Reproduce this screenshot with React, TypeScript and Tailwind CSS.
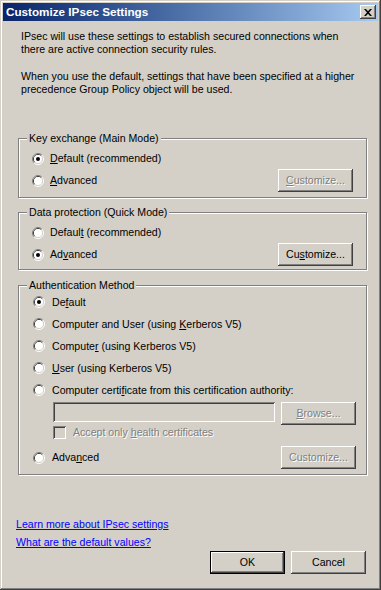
import React from "react";

const RAISED =
  "shadow-[inset_-1px_-1px_0_#404040,inset_1px_1px_0_#ffffff,inset_-2px_-2px_0_#808080,inset_2px_2px_0_#d4d0c8]";

function Radio({ checked }: { checked?: boolean }) {
  return (
    <svg width="12" height="12" viewBox="0 0 12 12" className="shrink-0 block">
      <path d="M2.11 9.89A5.5 5.5 0 0 1 9.89 2.11" stroke="#808080" fill="none" />
      <path d="M9.89 2.11A5.5 5.5 0 0 1 2.11 9.89" stroke="#ffffff" fill="none" />
      <path d="M2.82 9.18A4.5 4.5 0 0 1 9.18 2.82" stroke="#404040" fill="none" />
      <path d="M9.18 2.82A4.5 4.5 0 0 1 2.82 9.18" stroke="#d4d0c8" fill="none" />
      <circle cx="6" cy="6" r="4" fill="#ffffff" />
      {checked && <circle cx="6" cy="6" r="2" fill="#000000" />}
    </svg>
  );
}

function Btn({
  children,
  disabled,
  def,
  className = "",
}: {
  children: React.ReactNode;
  disabled?: boolean;
  def?: boolean;
  className?: string;
}) {
  const base = def
    ? "border border-black shadow-[inset_-1px_-1px_0_#404040,inset_1px_1px_0_#ffffff,inset_-2px_-2px_0_#808080,inset_2px_2px_0_#d4d0c8]"
    : RAISED;
  const txt = disabled ? "text-[#808080] [text-shadow:1px_1px_0_#ffffff]" : "text-black";
  return (
    <div
      className={`w-[75px] h-[23px] shrink-0 flex items-center justify-center bg-[#d4d0c8] ${base} ${txt} ${className}`}
    >
      {children}
    </div>
  );
}

function U({ children }: { children: React.ReactNode }) {
  return <span className="underline underline-offset-[1px]">{children}</span>;
}

const SUNKEN =
  "shadow-[inset_1px_1px_0_#808080,inset_-1px_-1px_0_#ffffff,inset_2px_2px_0_#404040,inset_-2px_-2px_0_#d4d0c8]";

export default function App() {
  return (
    <div className="w-[381px] h-[590px] bg-[#d4d0c8] p-[3px] flex flex-col overflow-hidden font-['Liberation_Sans',Arial,sans-serif] text-[10.6px] leading-[13px] text-black shadow-[inset_-1px_-1px_0_#404040,inset_1px_1px_0_#d4d0c8,inset_-2px_-2px_0_#808080,inset_2px_2px_0_#ffffff]">
      {/* Title bar */}
      <div className="h-[18px] shrink-0 flex items-center bg-linear-to-r from-[#0a246a] to-[#a6caf0] pl-[3px] pr-[2px]">
        <span className="flex-1 text-white font-bold text-[11.7px] leading-[14px]">
          Customize IPsec Settings
        </span>
        <div className={`w-[16px] h-[14px] bg-[#d4d0c8] flex items-center justify-center ${RAISED}`}>
          <svg width="8" height="7" viewBox="0 0 8 7" className="block">
            <path
              d="M0 0h2l2 2.2L6 0h2L5 3.5 8 7H6L4 4.8 2 7H0l3-3.5z"
              fill="#000000"
            />
          </svg>
        </div>
      </div>

      {/* Content */}
      <div className="flex flex-col flex-1">
        <p className="ml-[18px] mt-[9px]">
          IPsec will use these settings to establish secured connections when
          <br />
          there are active connection security rules.
        </p>
        <p className="ml-[18px] mt-[14px]">
          When you use the default, settings that have been specified at a higher
          <br />
          precedence Group Policy object will be used.
        </p>

        {/* Key exchange */}
        <div className="relative ml-[15px] mt-[42px] w-[349px] border border-[#808080] shadow-[inset_1px_1px_0_#ffffff,1px_1px_0_#ffffff] pt-[9px] pb-[5px] pl-[13px] pr-[13px]">
          <span className="absolute left-[8px] top-[-7px] px-[2px] bg-[#d4d0c8]">
            Key exchange (Main Mode)
          </span>
          <div className="flex items-center h-[21px]">
            <Radio checked />
            <span className="ml-[6px]">
              <U>D</U>efault (recommended)
            </span>
          </div>
          <div className="flex items-center h-[23px]">
            <Radio />
            <span className="ml-[6px]">
              <U>A</U>dvanced
            </span>
            <Btn disabled className="ml-auto">
              <span>
                <U>C</U>ustomize...
              </span>
            </Btn>
          </div>
        </div>

        {/* Data protection */}
        <div className="relative ml-[15px] mt-[14px] w-[349px] border border-[#808080] shadow-[inset_1px_1px_0_#ffffff,1px_1px_0_#ffffff] pt-[9px] pb-[3px] pl-[13px] pr-[13px]">
          <span className="absolute left-[8px] top-[-7px] px-[2px] bg-[#d4d0c8]">
            Data protection (Quick Mode)
          </span>
          <div className="flex items-center h-[21px]">
            <Radio />
            <span className="ml-[6px]">
              Defaul<U>t</U> (recommended)
            </span>
          </div>
          <div className="flex items-center h-[23px]">
            <Radio checked />
            <span className="ml-[6px]">
              Ad<U>v</U>anced
            </span>
            <Btn className="ml-auto">
              <span>
                Cu<U>s</U>tomize...
              </span>
            </Btn>
          </div>
        </div>

        {/* Authentication */}
        <div className="relative ml-[15px] mt-[15px] w-[349px] border border-[#808080] shadow-[inset_1px_1px_0_#ffffff,1px_1px_0_#ffffff] pt-[5px] pb-[5px] pl-[14px] pr-[10px]">
          <span className="absolute left-[8px] top-[-7px] px-[2px] bg-[#d4d0c8]">
            Authentication Method
          </span>
          <div className="flex items-center h-[22px]">
            <Radio checked />
            <span className="ml-[7px]">
              De<U>f</U>ault
            </span>
          </div>
          <div className="flex items-center h-[22px]">
            <Radio />
            <span className="ml-[7px]">
              Computer and User (using <U>K</U>erberos V5)
            </span>
          </div>
          <div className="flex items-center h-[22px]">
            <Radio />
            <span className="ml-[7px]">
              Compute<U>r</U> (using Kerberos V5)
            </span>
          </div>
          <div className="flex items-center h-[22px]">
            <Radio />
            <span className="ml-[7px]">
              <U>U</U>ser (using Kerberos V5)
            </span>
          </div>
          <div className="flex items-center h-[22px]">
            <Radio />
            <span className="ml-[7px]">
              Computer certi<U>f</U>icate from this certification authority:
            </span>
          </div>
          <div className="flex items-start h-[22px] mt-[1px]">
            <div className={`ml-[20px] w-[222px] h-[20px] bg-[#d4d0c8] ${SUNKEN}`} />
            <Btn disabled className="ml-auto h-[22px]">
              <span>
                <U>B</U>rowse...
              </span>
            </Btn>
          </div>
          <div className="flex items-center h-[16px]">
            <div className={`ml-[20px] w-[13px] h-[13px] shrink-0 bg-[#d4d0c8] ${SUNKEN}`} />
            <span className="ml-[7px] text-[#808080] [text-shadow:1px_1px_0_#ffffff]">
              Accept only <U>h</U>ealth certificates
            </span>
          </div>
          <div className="flex items-center h-[23px] mt-[6px]">
            <Radio />
            <span className="ml-[7px]">
              Adva<U>n</U>ced
            </span>
            <Btn disabled className="ml-auto">
              <span>Customize...</span>
            </Btn>
          </div>
        </div>

        {/* Links */}
        <div className="ml-[13px] mt-[43px] flex flex-col items-start">
          <span className="text-[#0000ff] underline underline-offset-[1px]">
            Learn more about IPsec settings
          </span>
          <span className="mt-[5px] text-[#0000ff] underline underline-offset-[1px]">
            What are the default values?
          </span>
        </div>

        {/* Buttons */}
        <div className="mt-[2px] mr-[12px] flex justify-end gap-[6px]">
          <Btn def>OK</Btn>
          <Btn>Cancel</Btn>
        </div>
      </div>
    </div>
  );
}
